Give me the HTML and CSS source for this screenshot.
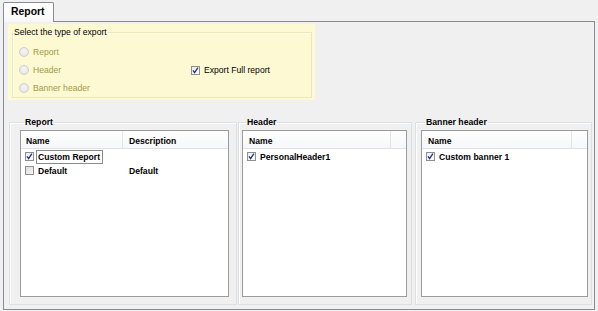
FILE: index.html
```html
<html>
<head>
    <title>Export</title>
    <link rel="stylesheet" href="styles.css">
</head>
<body>
    <div id="tab-bar">
        <div class="tab">Report</div>
    </div>
    <div id="tab-panel">
        <div id="export-box">
            <fieldset class="export-group">
                <legend>Select the type of export</legend>
                <div class="export-body">
                    <div class="radios">
                        <div class="radio-row"><span class="radio"></span>Report</div>
                        <div class="radio-row"><span class="radio"></span>Header</div>
                        <div class="radio-row"><span class="radio"></span>Banner header</div>
                    </div>
                    <div class="check-row">
                        <span class="check checked"><svg viewBox="0 0 9 9" width="9" height="9"><path d="M2 4.3 L3.6 6.6 L6.9 1.6" fill="none" stroke="#1e2f8a" stroke-width="1.3"/></svg></span>
                        Export Full report
                    </div>
                </div>
            </fieldset>
        </div>

        <div id="lists">
            <fieldset class="group group-report">
                <legend>Report</legend>
                <div class="list">
                    <div class="list-head">
                        <div class="col col-name">Name</div>
                        <div class="col col-desc">Description</div>
                    </div>
                    <div class="item">
                        <span class="check checked"><svg viewBox="0 0 9 9" width="9" height="9"><path d="M2 4.3 L3.6 6.6 L6.9 1.6" fill="none" stroke="#1e2f8a" stroke-width="1.3"/></svg></span>
                        <span class="item-name"><span class="focus">Custom Report</span></span>
                    </div>
                    <div class="item">
                        <span class="check"></span>
                        <span class="item-name"><span class="plain">Default</span></span>
                        <span class="item-desc">Default</span>
                    </div>
                </div>
            </fieldset>

            <fieldset class="group group-header">
                <legend>Header</legend>
                <div class="list">
                    <div class="list-head">
                        <div class="col col-single">Name</div>
                        <div class="col col-rest"></div>
                    </div>
                    <div class="item">
                        <span class="check checked"><svg viewBox="0 0 9 9" width="9" height="9"><path d="M2 4.3 L3.6 6.6 L6.9 1.6" fill="none" stroke="#1e2f8a" stroke-width="1.3"/></svg></span>
                        <span class="item-name"><span class="plain">PersonalHeader1</span></span>
                    </div>
                </div>
            </fieldset>

            <fieldset class="group group-banner">
                <legend>Banner header</legend>
                <div class="list">
                    <div class="list-head">
                        <div class="col col-single">Name</div>
                        <div class="col col-rest"></div>
                    </div>
                    <div class="item">
                        <span class="check checked"><svg viewBox="0 0 9 9" width="9" height="9"><path d="M2 4.3 L3.6 6.6 L6.9 1.6" fill="none" stroke="#1e2f8a" stroke-width="1.3"/></svg></span>
                        <span class="item-name"><span class="plain">Custom banner 1</span></span>
                    </div>
                </div>
            </fieldset>
        </div>
    </div>
</body>
</html>
```

FILE: styles.css
```css
* {
    box-sizing: border-box;
}

body {
    margin: 0;
    width: 598px;
    height: 311px;
    overflow: hidden;
    background-color: #f0f0f0;
    font-family: "Liberation Sans", Arial, sans-serif;
    font-size: 8.6px;
    color: #000;
}

#tab-bar {
    height: 21px;
    padding: 2px 0 0 3px;
}

.tab {
    width: 51px;
    height: 20px;
    border: 1px solid #898c95;
    border-bottom: none;
    border-radius: 2px 2px 0 0;
    background: linear-gradient(#ffffff, #f7f7f7);
    font-size: 10.4px;
    font-weight: bold;
    line-height: 18px;
    padding-left: 7px;
    position: relative;
    z-index: 1;
}

#tab-panel {
    margin: 0 3px 0 3px;
    height: 289px;
    border: 1px solid #898c95;
    padding: 2px 0 0 4px;
}

#export-box {
    width: 307px;
    height: 76px;
    background-color: #fdf9d3;
    padding: 2px 3px 2px 4px;
}

fieldset {
    margin: 0;
    padding: 0;
    min-width: 0;
}

legend {
    line-height: 12px;
    padding: 0 1px;
}

.export-group {
    border: 1px solid #ebe6c2;
    box-shadow: inset 1px 1px 0 #fffdf0;
}

.export-group legend {
    margin-left: 0;
}

.export-body {
    display: flex;
    padding: 5px 0 0 6px;
}

.radios {
    width: 172px;
}

.radio-row {
    height: 18px;
    display: flex;
    align-items: center;
    color: #a39a45;
}

.radio {
    width: 10px;
    height: 10px;
    border-radius: 50%;
    border: 1px solid #cfcfcf;
    background: radial-gradient(circle at 50% 40%, #f7f7f7, #e0e0e0);
    margin-right: 4px;
}

.check-row {
    margin-top: 18px;
    height: 18px;
    display: flex;
    align-items: center;
}

.check {
    width: 9px;
    height: 9px;
    border: 1px solid #8f8f8f;
    background: linear-gradient(135deg, #dcdcdc, #f6f6f6);
    display: inline-block;
    position: relative;
    flex-shrink: 0;
}

.check svg {
    position: absolute;
    left: -1px;
    top: -1px;
}

.check.checked {
    background: linear-gradient(135deg, #e9ecf2, #ffffff);
}

.check-row .check {
    margin-right: 4px;
}

#lists {
    display: flex;
    margin-top: 16px;
}

.group {
    height: 189px;
    border: 1px solid #dde0e2;
    box-shadow: inset 1px 1px 0 #ffffff;
    font-weight: bold;
}

.group legend {
    margin-left: 4px;
    font-size: 8.7px;
}

.group-report {
    width: 228px;
    margin-left: 1px;
    padding: 2px 7px 0 10px;
}

.group-header {
    width: 174px;
    margin-left: 1px;
    padding: 2px 4px 0 3px;
}

.group-banner {
    width: 177px;
    margin-left: 3px;
    padding: 2px 3px 0 5px;
}

.list {
    height: 167px;
    background-color: #fff;
    border: 1px solid #9b9b9b;
}

.list-head {
    display: flex;
    height: 18px;
    border-bottom: 1px solid #e2e2e2;
    background: linear-gradient(#ffffff, #f6f7f9);
}

.col {
    line-height: 20px;
    padding-left: 5px;
    border-right: 1px solid #e4e4e4;
}

.col-name {
    width: 102px;
}

.col-desc {
    flex: 1;
    border-right: none;
    padding-left: 6px;
}

.col-single {
    flex: 1;
    padding-left: 6px;
}

.col-rest {
    width: 15px;
    border-right: none;
}

.item {
    display: flex;
    align-items: center;
    height: 13px;
    margin-top: 1px;
}

.item .check {
    margin-left: 4px;
}

.item-name {
    width: 90px;
    padding-left: 2px;
    white-space: nowrap;
}

.focus {
    border: 1px solid #8a8a8a;
    padding: 0 2px 0 1px;
    line-height: 12px;
    display: inline-block;
}

.plain {
    padding-left: 2px;
    line-height: 12px;
}

.item-desc {
    padding-left: 5px;
}
```
